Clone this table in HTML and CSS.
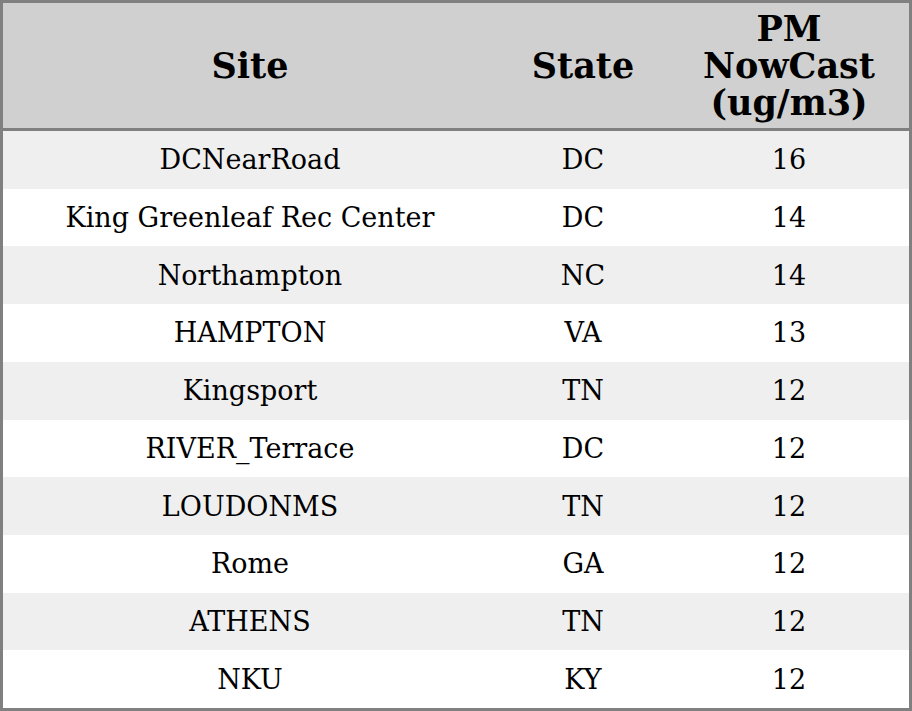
FILE: index.html
```html
<!DOCTYPE html>
<html>
<head>
<meta charset="utf-8">
<link rel="stylesheet" href="styles.css">
</head>
<body>
<div class="table">
  <div class="row head">
    <div class="cell">Site</div>
    <div class="cell">State</div>
    <div class="cell">PM<br>NowCast<br>(ug/m3)</div>
  </div>
  <div class="row odd"><div class="cell">DCNearRoad</div><div class="cell">DC</div><div class="cell">16</div></div>
  <div class="row"><div class="cell">King Greenleaf Rec Center</div><div class="cell">DC</div><div class="cell">14</div></div>
  <div class="row odd"><div class="cell">Northampton</div><div class="cell">NC</div><div class="cell">14</div></div>
  <div class="row"><div class="cell">HAMPTON</div><div class="cell">VA</div><div class="cell">13</div></div>
  <div class="row odd"><div class="cell">Kingsport</div><div class="cell">TN</div><div class="cell">12</div></div>
  <div class="row"><div class="cell">RIVER_Terrace</div><div class="cell">DC</div><div class="cell">12</div></div>
  <div class="row odd"><div class="cell">LOUDONMS</div><div class="cell">TN</div><div class="cell">12</div></div>
  <div class="row"><div class="cell">Rome</div><div class="cell">GA</div><div class="cell">12</div></div>
  <div class="row odd"><div class="cell">ATHENS</div><div class="cell">TN</div><div class="cell">12</div></div>
  <div class="row"><div class="cell">NKU</div><div class="cell">KY</div><div class="cell">12</div></div>
</div>
</body>
</html>
```
FILE: styles.css
```css
html, body {
  margin: 0;
  padding: 0;
  background: #ffffff;
}
.table {
  box-sizing: border-box;
  width: 912px;
  height: 711px;
  border: 3px solid #808080;
  display: grid;
  grid-template-rows: 128px repeat(10, 1fr);
  font-family: "DejaVu Serif", serif;
  font-size: 27px;
  color: #000;
}
.row {
  display: grid;
  grid-template-columns: 494px 172px 240px;
  background: #ffffff;
}
.row.odd {
  background: #efefef;
}
.row.head {
  background: #d0d0d0;
  border-bottom: 3px solid #808080;
  font-weight: bold;
  font-size: 35px;
  line-height: 37px;
}
.cell {
  display: flex;
  align-items: center;
  justify-content: center;
  text-align: center;
}
```
